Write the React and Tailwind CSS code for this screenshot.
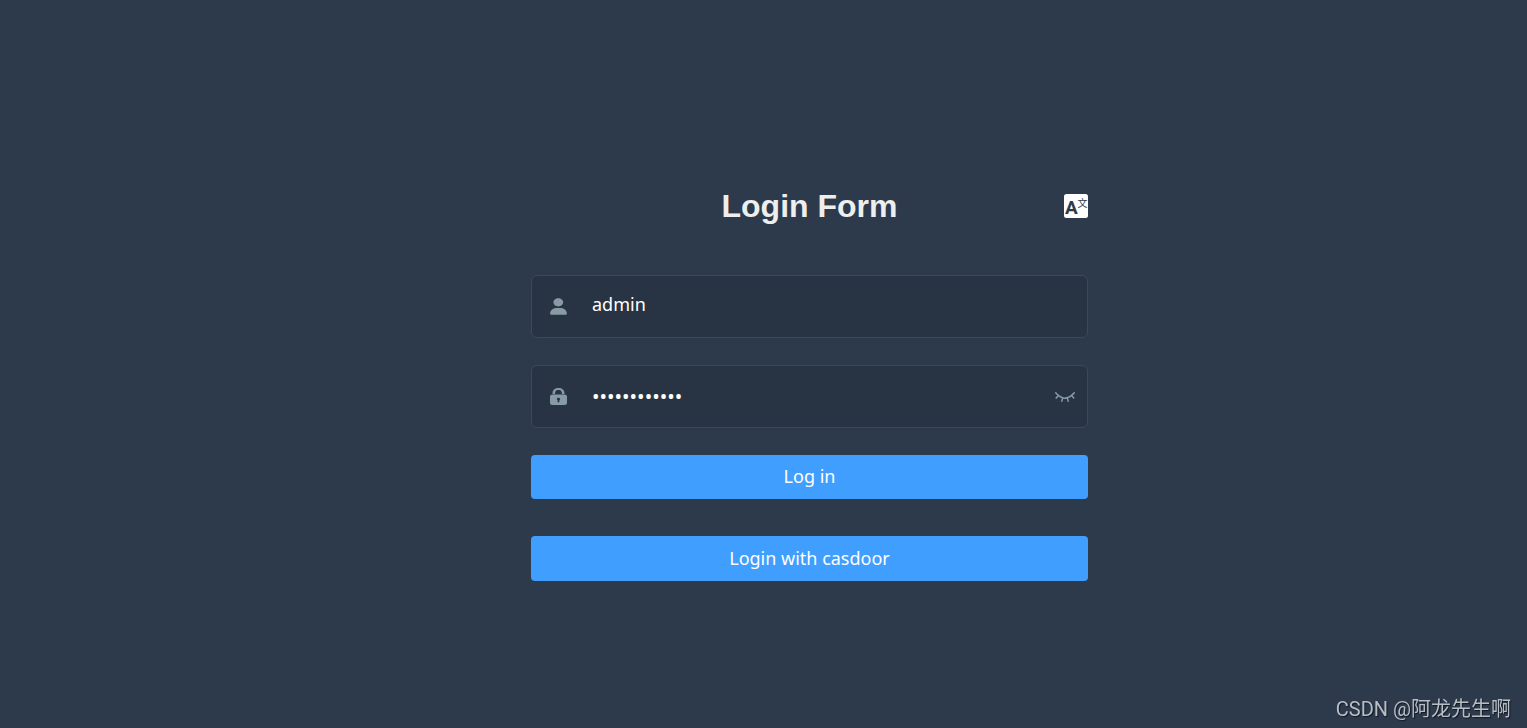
import { useState } from "react";

function UserIcon() {
  return (
    <svg viewBox="0 0 130 130" className="size-[17px]" fill="currentColor" aria-hidden="true">
      <path d="M63.444 64.996c20.633 0 37.359-14.308 37.359-31.953 0-17.649-16.726-31.952-37.359-31.952-20.631 0-37.36 14.303-37.36 31.952 0 17.645 16.729 31.953 37.36 31.953zM80.57 75.65H49.434c-26.652 0-48.26 18.477-48.26 41.27v2.664c0 9.316 21.608 9.325 48.26 9.325H80.57c26.649 0 48.256-.344 48.256-9.325v-2.663c0-22.794-21.605-41.271-48.256-41.271z" />
    </svg>
  );
}

function LockIcon() {
  return (
    <svg viewBox="0 0 128 128" className="size-[17px]" fill="currentColor" aria-hidden="true">
      <path d="M108.8 44.322H89.6v-5.36c0-9.04-3.308-24.163-25.6-24.163-23.145 0-25.6 16.881-25.6 24.162v5.361H19.2v-5.36C19.2 15.281 36.798 0 64 0c27.202 0 44.8 15.281 44.8 38.961v5.361zm-32 39.356c0-5.44-5.763-9.832-12.8-9.832-7.037 0-12.8 4.392-12.8 9.832 0 3.682 2.567 6.808 6.407 8.477v11.205c0 2.718 2.875 4.962 6.4 4.962 3.524 0 6.4-2.244 6.4-4.962V92.155c3.833-1.669 6.393-4.795 6.393-8.477zM128 64v49.201c0 8.158-8.645 14.799-19.2 14.799H19.2C8.651 128 0 121.359 0 113.201V64c0-8.153 8.645-14.799 19.2-14.799h89.6c10.555 0 19.2 6.646 19.2 14.799z" />
    </svg>
  );
}

function ClosedEyeIcon() {
  return (
    <svg viewBox="0 0 128 64" className="h-[10px] w-5" fill="currentColor" aria-hidden="true">
      <path d="M127.072 7.994c1.37-2.208.914-5.152-.914-6.87-2.056-1.717-4.797-1.226-6.396.982-.229.245-25.586 32.382-55.74 32.382-29.24 0-55.74-32.382-55.968-32.627-1.6-1.963-4.57-2.208-6.397-.49C-.17 3.086-.399 6.275 1.2 8.238c.457.736 5.94 7.36 14.62 14.72L4.17 35.96c-1.828 1.963-1.6 5.152.228 6.87.457.98 1.6 1.471 2.742 1.471s2.284-.49 3.198-1.472l12.564-13.983c5.94 4.416 13.021 8.587 20.788 11.53l-4.797 17.418c-.685 2.699.686 5.397 3.198 6.133h1.37c2.057 0 3.884-1.472 4.341-3.68L52.6 42.83c3.655.736 7.538 1.227 11.422 1.227 3.883 0 7.767-.49 11.422-1.227l4.797 17.173c.457 2.208 2.513 3.68 4.34 3.68.457 0 .914 0 1.143-.246 2.513-.736 3.883-3.434 3.198-6.133l-4.797-17.172c7.767-2.944 14.848-7.114 20.788-11.53l12.336 13.738c.913.981 2.056 1.472 3.198 1.472s2.284-.49 3.198-1.472c1.828-1.963 1.828-4.906.228-6.87l-11.65-13.001c9.366-7.36 14.849-14.474 14.849-14.474z" />
    </svg>
  );
}

function LanguageIcon() {
  return (
    <svg viewBox="0 0 24 24" className="size-6 font-[Roboto,'Noto_Sans_CJK_SC',sans-serif]" aria-hidden="true">
      <rect width="24" height="24" rx="2.5" fill="#fff" />
      <text x="1" y="20" fontSize="19" fontWeight="700" fill="#2d3a4b">A</text>
      <text x="13.5" y="13" fontSize="10" fill="#2d3a4b">文</text>
    </svg>
  );
}

function App() {

  const [formData, setFormData] = useState({
    username: "admin",
    password: "abcdefghijkl",
  });
  const [showPassword, setShowPassword] = useState(false);

  const handleChange = (e) => {

    setFormData({
      ...formData,
      [e.target.name]: e.target.value,
    });

  };

  return (
    <div className="min-h-screen bg-[#2d3a4b] font-['Noto_Sans','Noto_Sans_CJK_SC',sans-serif] text-lg">

      {/* LOGIN FORM */}
      <form
        onSubmit={(e) => e.preventDefault()}
        className="mx-auto w-full max-w-[557px] pt-[186px] lg:translate-x-[46px]"
      >

        {/* TITLE */}
        <div className="mb-[49px] grid grid-cols-[1fr_auto_1fr] items-center font-['Liberation_Sans','Noto_Sans_CJK_SC',sans-serif]">

          <h1 className="col-start-2 text-[32px] leading-10 font-bold text-[#eee]">
            Login Form
          </h1>

          <button type="button" aria-label="Change language" className="justify-self-end">
            <LanguageIcon />
          </button>

        </div>


        <div className="mb-[27px] flex h-[63px] items-center rounded-md border border-[#3e4957] bg-[#283443]">

          <label htmlFor="username" aria-label="Username" className="pl-[18px] text-[#889aa4]">
            <UserIcon />
          </label>

          <input
            id="username"
            type="text"
            name="username"
            value={formData.username}
            onChange={handleChange}
            className="min-w-0 flex-1 px-[25px] pb-1.5 leading-6 text-white outline-none"
          />

        </div>


        <div className="mb-[27px] flex h-[63px] items-center rounded-md border border-[#3e4957] bg-[#283443]">

          <label htmlFor="password" aria-label="Password" className="pl-[18px] text-[#889aa4]">
            <LockIcon />
          </label>

          <input
            id="password"
            type={showPassword ? "text" : "password"}
            name="password"
            value={formData.password}
            onChange={handleChange}
            className="min-w-0 flex-1 px-[25px] text-xl leading-6 text-white outline-none"
          />

          <button
            type="button"
            aria-label="Show password"
            onClick={() => setShowPassword(!showPassword)}
            className="pr-3 text-[#889aa4]"
          >
            <ClosedEyeIcon />
          </button>

        </div>


        <button
          type="submit"
          className="mb-[37px] block h-11 w-full rounded bg-[#409eff] pb-0.5 text-white"
        >
          Log in
        </button>

        <button
          type="button"
          className="block h-[45px] w-full rounded bg-[#409eff] pb-0.5 text-white"
        >
          Login with casdoor
        </button>

      </form>


      {/* WATERMARK */}
      <p className="fixed right-4 bottom-[3px] font-[Roboto,'Noto_Sans_CJK_SC',sans-serif] text-xl leading-8 text-[#b9bec4] [text-shadow:1px_1px_1px_#111827]">
        CSDN @阿龙先生啊
      </p>

    </div>
  );
}

export default App;
